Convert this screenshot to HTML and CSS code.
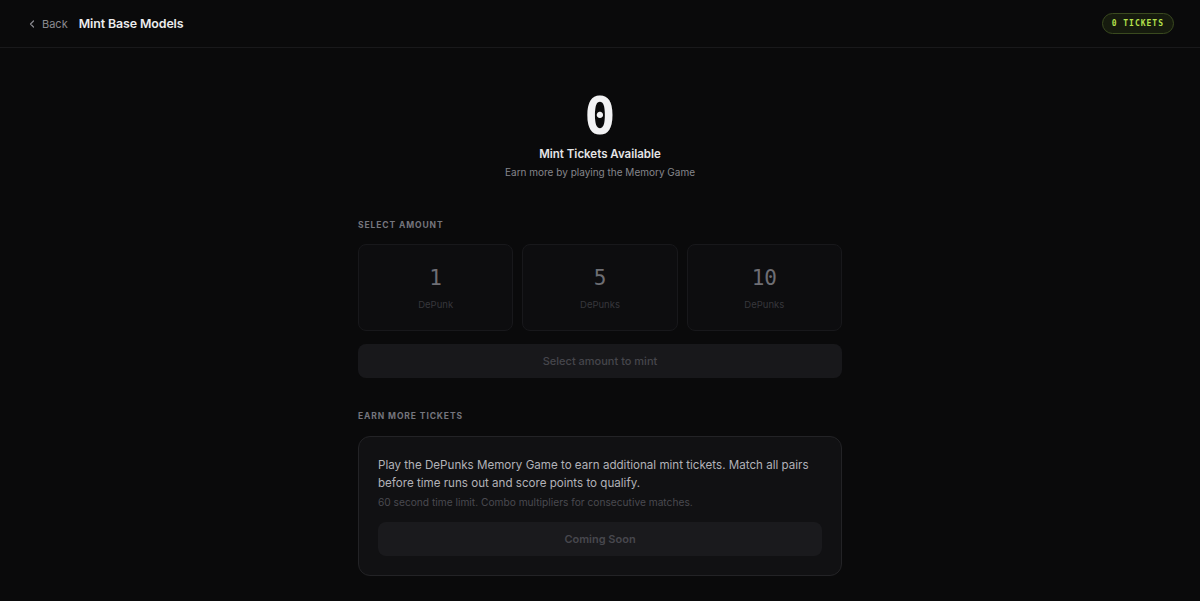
FILE: index.html
```html
<!DOCTYPE html>
<html>
<head>
<meta charset="utf-8">
<link rel="stylesheet" href="styles.css">
</head>
<body>
<header class="topbar">
  <div class="left">
    <a class="back"><svg width="8" height="8" viewBox="0 0 8 8"><path d="M5.5 1 L2.5 4 L5.5 7" fill="none" stroke="#8a8a90" stroke-width="1.2" stroke-linecap="round" stroke-linejoin="round"/></svg><span>Back</span></a>
    <h1 class="title">Mint Base Models</h1>
  </div>
  <div class="badge">0 TICKETS</div>
</header>
<main class="main">
  <section class="hero">
    <div class="count">0</div>
    <div class="hero-title">Mint Tickets Available</div>
    <div class="hero-sub">Earn more by playing the Memory Game</div>
  </section>
  <div class="label">SELECT AMOUNT</div>
  <div class="amounts">
    <div class="amount"><div class="num">1</div><div class="unit">DePunk</div></div>
    <div class="amount"><div class="num">5</div><div class="unit">DePunks</div></div>
    <div class="amount"><div class="num">10</div><div class="unit">DePunks</div></div>
  </div>
  <div class="btn mint">Select amount to mint</div>
  <div class="label earn">EARN MORE TICKETS</div>
  <div class="panel">
    <p class="desc">Play the DePunks Memory Game to earn additional mint tickets. Match all pairs before time runs out and score points to qualify.</p>
    <p class="note">60 second time limit. Combo multipliers for consecutive matches.</p>
    <div class="btn soon">Coming Soon</div>
  </div>
</main>
</body>
</html>
```
FILE: styles.css
```css
* { box-sizing: border-box; }
html, body { margin: 0; padding: 0; background: #0a0a0b; }
body { font-family: Inter, "Noto Sans", sans-serif; color: #e6e6e8; width: 1200px; height: 601px; overflow: hidden; }
.topbar { height: 48px; border-bottom: 1px solid #19191b; display: flex; align-items: center; justify-content: space-between; padding: 0 26px 0 28px; }
.left { display: flex; align-items: center; gap: 11px; }
.back { display: flex; align-items: center; gap: 6px; color: #8a8a90; font-size: 11px; }
.title { margin: 0; font-size: 12.4px; font-weight: 600; color: #ececee; letter-spacing: -0.1px; }
.badge { height: 21px; padding: 0 9px; border-radius: 11px; background: #161b0e; border: 1px solid #3a4a1f; color: #b4e04c; font-family: "DejaVu Sans Mono", monospace; font-size: 8px; font-weight: bold; letter-spacing: 1px; display: flex; align-items: center; }
.main { width: 484px; margin: 0 auto; display: flex; flex-direction: column; }
.hero { display: flex; flex-direction: column; align-items: center; padding-top: 40px; }
.count { font-family: "DejaVu Sans Mono", monospace; font-weight: bold; font-size: 52px; line-height: 56px; color: #f2f2f4; }
.hero-title { margin-top: 2px; font-size: 11.5px; font-weight: 600; color: #e4e4e6; line-height: 16px; }
.hero-sub { margin-top: 3px; font-size: 10px; color: #86868c; line-height: 14px; }
.label { margin-top: 40px; font-size: 8.5px; font-weight: 700; letter-spacing: 0.9px; color: #75757d; line-height: 12px; }
.amounts { margin-top: 13px; display: grid; grid-template-columns: repeat(3, 1fr); gap: 9px; }
.amount { height: 87px; border: 1px solid #18181b; border-radius: 8px; background: #0d0d0f; display: flex; flex-direction: column; align-items: center; padding-top: 20px; }
.num { font-family: "DejaVu Sans Mono", monospace; font-size: 21px; line-height: 26px; color: #6e6e74; }
.unit { margin-top: 8px; font-size: 9.5px; color: #37373c; }
.btn { height: 34px; border-radius: 8px; background: #18181b; display: flex; align-items: center; justify-content: center; font-size: 11px; font-weight: 500; color: #46464c; }
.mint { margin-top: 13px; }
.label.earn { margin-top: 32px; }
.panel { margin-top: 14px; border: 1px solid #232326; border-radius: 12px; background: #111113; padding: 19px 19px 19px; }
.desc { margin: 0; font-size: 11.6px; line-height: 18px; color: #b2b2b8; }
.note { margin: 3px 0 0; font-size: 10.2px; line-height: 15px; color: #4a4a50; }
.soon { margin-top: 12px; background: #1a1a1d; font-weight: 600; color: #47474d; }
```
